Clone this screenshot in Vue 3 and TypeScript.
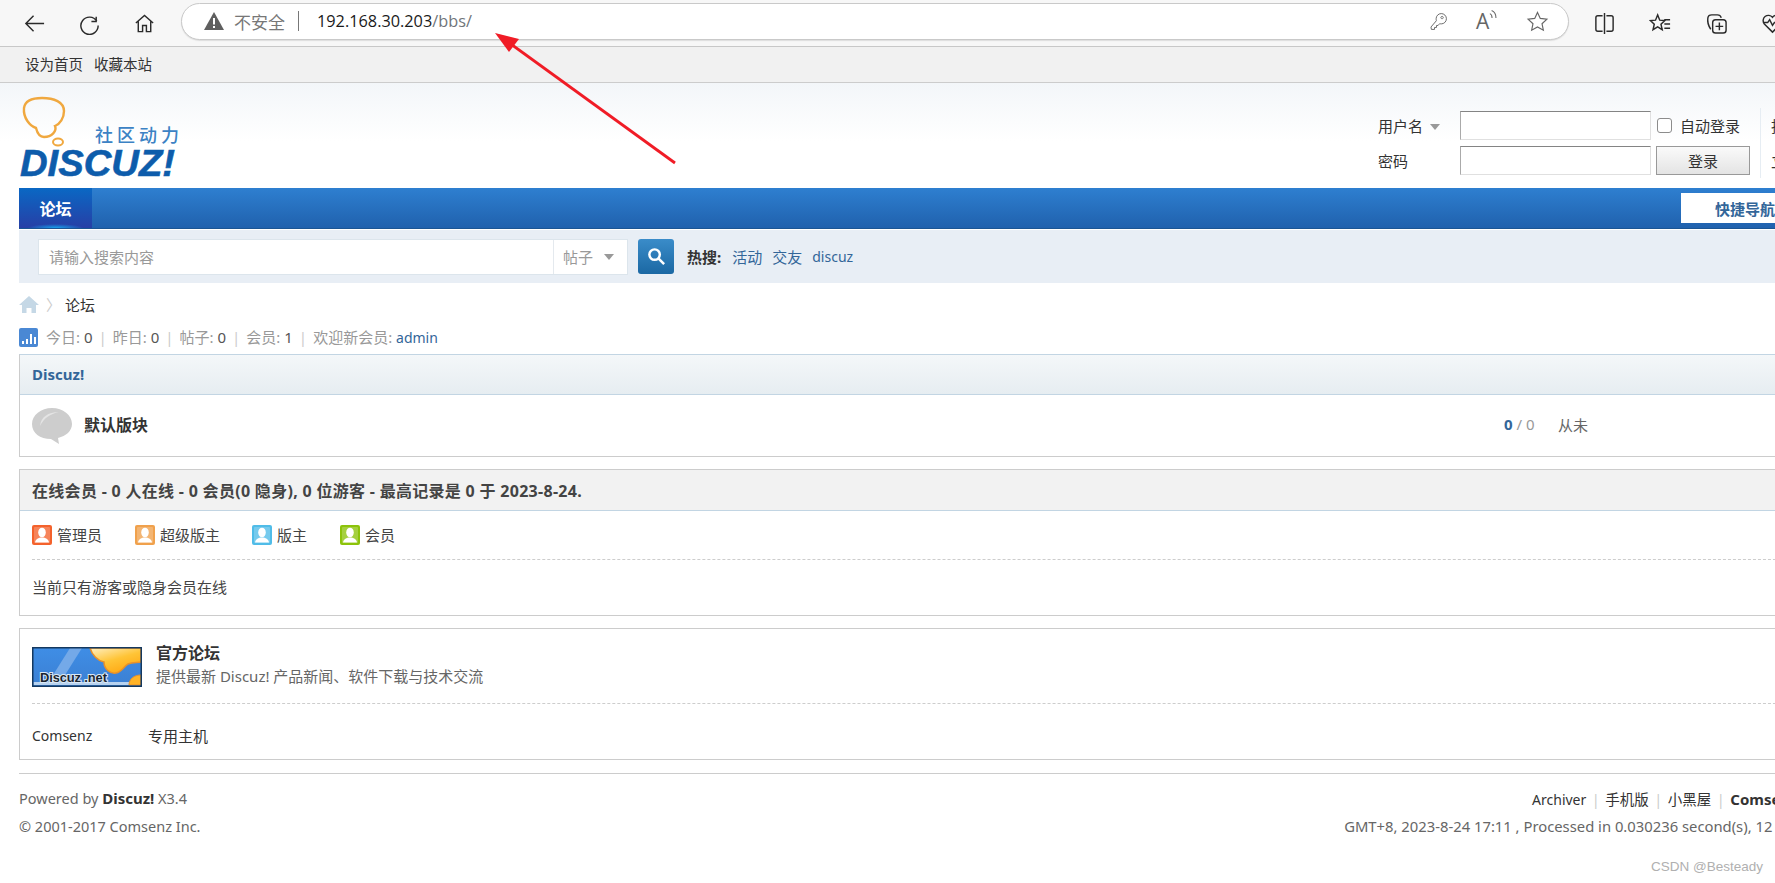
<template>
  <div class="screen">
    <!-- browser toolbar -->
    <div class="toolbar">
      <div class="nav-btns">
        <svg class="ico" viewBox="0 0 24 24"><path d="M22 12H3M11 4l-8 8 8 8" /></svg>
        <svg class="ico" viewBox="0 0 24 24"><path d="M19 5v5h-5M19.6 9.5A9 9 0 1 0 21 14" /></svg>
        <svg class="ico" viewBox="0 0 24 24"><path d="M3 11.5 12 3.5l9 8M5.5 10v10.5h4.5v-6.5h4v6.500h4.500V10" /></svg>
      </div>
      <div class="address">
        <svg class="warn" viewBox="0 0 20 18"><path d="M10 0 20 18H0z" fill="#5f5f5f" /><path d="M9 6h2v6.500H9zM9 14h2v2H9z" fill="#fff" /></svg>
        <span class="insecure">不安全</span>
        <i class="addr-sep"></i>
        <span class="url">192.168.30.203<em>/bbs/</em></span>
        <div class="addr-icons">
          <svg class="ico thin key" viewBox="0 0 24 24"><path d="M15.500 2a6.500 6.500 0 0 1 0 13q-1 0-2-.3l-2 2.300H9.500v2.500H7v2.500H3L2.500 19 9.300 11q-.3-1-.3-2.500A6.500 6.500 0 0 1 15.500 2zM16.500 5.500a1.500 1.500 0 1 0 .01 0z" /></svg>
          <span class="read-aloud">A<svg viewBox="0 0 10 12"><path d="M1 5q2.500 1 2.500 5M3 1.500q5 2 5 8.500" /></svg></span>
          <svg class="ico thin" viewBox="0 0 24 24"><path d="m12 2.500 2.900 6.300 6.900.8-5.100 4.700 1.400 6.800-6.100-3.400-6.100 3.400 1.400-6.800-5.100-4.700 6.900-.8z" /></svg>
        </div>
      </div>
      <div class="tool-icons">
        <svg class="ico" viewBox="0 0 24 24"><path d="M10 4H5a2 2 0 0 0-2 2v12a2 2 0 0 0 2 2h5M14 4h5a2 2 0 0 1 2 2v12a2 2 0 0 1-2 2h-5M12 1v22" /></svg>
        <svg class="ico" viewBox="0 0 24 24"><path d="m9 3 2.200 5.500 5.300.4-4 3.800 1.300 5.800L9 15.500l-4.800 3 1.300-5.800-4-3.800 5.300-.4zM16 8h6M16 12.500h6M16 17h6" /></svg>
        <svg class="ico" viewBox="0 0 24 24"><path d="M6 18Q2 12 3 6q.5-3 4-3h6q3 0 4 3" /><rect x="8" y="8" width="14" height="14" rx="3" /><path d="M15 11v8M11 15h8" /></svg>
        <svg class="ico" viewBox="0 0 24 24"><path d="M12 21 3.500 12.500a5.500 5.500 0 0 1 8.500-7 5.500 5.500 0 0 1 8.500 7zM2 11h5l2-3 3 6 2-3h5" /><circle cx="19" cy="20" r="3.500" fill="#2d9a3a" stroke="none" /></svg>
      </div>
    </div>

    <!-- forum top links -->
    <div class="topbar">
      <a>设为首页</a>
      <a>收藏本站</a>
    </div>

    <div class="wrap">
      <header class="head">
        <svg class="logo" viewBox="0 0 165 85" width="165" height="85">
          <path d="M5 12C6 5 13 2 23 2C35 2 45 6 45 15C45 22 41 28 36 30C38 35 33 41 25 41C20 41 18 36 17 32C11 30 4 22 5 12z" fill="none" stroke="#f0a83f" stroke-width="2.400" />
          <ellipse cx="39" cy="46" rx="5" ry="3.500" fill="none" stroke="#f0a83f" stroke-width="2" />
          <text class="slogan" x="76" y="46" textLength="84">社区动力</text>
          <text class="brand" x="1" y="80" textLength="155" lengthAdjust="spacingAndGlyphs">DISCUZ!</text>
        </svg>
        <div class="login">
          <div class="login-row">
            <label class="login-label">用户名<i class="caret small"></i></label>
            <input class="login-input" type="text" />
            <label class="remember"><span class="check"></span>自动登录</label>
            <span class="login-extra">找回密码</span>
          </div>
          <div class="login-row">
            <label class="login-label">密码</label>
            <input class="login-input" type="password" />
            <button class="login-btn">登录</button>
            <span class="login-extra">立即注册</span>
          </div>
          <i class="login-divider"></i>
        </div>
      </header>

      <nav class="mainnav">
        <a class="nav-tab">论坛</a>
        <a class="quick">快捷导航</a>
      </nav>

      <div class="searchbar">
        <div class="searchbox">
          <span class="placeholder">请输入搜索内容</span>
          <span class="scope">帖子<i class="caret"></i></span>
        </div>
        <button class="search-btn">
          <svg viewBox="0 0 20 20" width="19" height="19"><circle cx="8" cy="8" r="5.500" /><path d="m12 12 6 6" /></svg>
        </button>
        <div class="hot">
          <strong>热搜:</strong>
          <a v-for="h in hotWords" :key="h" :class="{ latin: h === 'discuz' }">{{ h }}</a>
        </div>
      </div>

      <div class="crumb">
        <svg viewBox="0 0 20 17" width="20" height="17"><path d="M10 0 20 9h-3v8h-4.500v-5h-5v5H3V9H0z" fill="#c5d8e6" /></svg>
        <span class="crumb-sep">〉</span>
        <span>论坛</span>
      </div>

      <div class="stats">
        <svg class="stats-ico" viewBox="0 0 19 19" width="19" height="19">
          <rect width="19" height="19" rx="2" fill="#4a88d4" />
          <path d="M3 13h2v3H3zM7 11h2v5H7zM11 6h2v10h-2zM15 9h2v7h-2z" fill="#fff" />
        </svg>
        <template v-for="(s, i) in stats" :key="s.label">
          <span v-if="i" class="pipe">|</span>
          <span>{{ s.label }}: <b>{{ s.value }}</b></span>
        </template>
        <span class="pipe">|</span>
        <span>欢迎新会员: <a class="latin">admin</a></span>
      </div>

      <section class="card forum">
        <h2 class="forum-head">Discuz!</h2>
        <div class="forum-row">
          <svg viewBox="0 0 40 36" width="40" height="36">
            <path d="M20 0C9 0 0 7 0 16s8 15 19 15l8 5-1-6c8-2 14-7 14-14C40 7 31 0 20 0z" fill="#cdcdcd" />
            <path d="M8 18C9 9 16 4 27 4 18 6 12 10 8 18z" fill="#e4e4e4" />
          </svg>
          <strong class="forum-name">默认版块</strong>
          <span class="forum-count"><b>0</b> / 0</span>
          <span class="forum-last">从未</span>
        </div>
      </section>

      <section class="card online">
        <h2 class="online-head">在线会员 - 0 人在线 - 0 会员(0 隐身), 0 位游客 - 最高记录是 0 于 2023-8-24.</h2>
        <div class="inner">
          <div class="legend">
            <span v-for="g in groups" :key="g.name" class="legend-item" :style="{ width: g.width + 'px' }">
              <svg viewBox="0 0 20 20" width="20" height="20">
                <rect width="20" height="20" rx="2" :fill="g.color" />
                <rect x="2" y="2" width="16" height="16" rx="1" fill="#fff" opacity=".22" />
                <ellipse cx="10" cy="7.500" rx="3.800" ry="4.800" fill="#fff" />
                <path d="M3 17.500c.5-3.500 3.500-5 7-5s6.500 1.500 7 5z" fill="#fff" />
              </svg>
              {{ g.name }}
            </span>
          </div>
          <div class="online-note">当前只有游客或隐身会员在线</div>
        </div>
      </section>

      <section class="card links">
        <div class="inner">
          <div class="link-main">
            <svg class="banner" viewBox="0 0 110 40" width="110" height="40">
              <defs>
                <linearGradient id="sky" x1="0" y1="0" x2="0" y2="1">
                  <stop offset="0" stop-color="#3f8ee6" />
                  <stop offset="1" stop-color="#3b7fd2" />
                </linearGradient>
                <linearGradient id="petal" x1="0" y1="0" x2="0.6" y2="1">
                  <stop offset="0" stop-color="#fff0c4" />
                  <stop offset=".55" stop-color="#ffc436" />
                  <stop offset="1" stop-color="#ffa914" />
                </linearGradient>
              </defs>
              <rect width="110" height="40" fill="url(#sky)" />
              <path d="M16 36 38 1h12L28 36z" fill="#74a9e8" />
              <rect x="1.500" y="35" width="107" height="3" fill="#b7d2ef" />
              <path d="M58 1C60 8 66 14 72 15C72 22 78 27 84 26C90 25 92 19 96 17C101 15 106 16 109 15V1Z" fill="url(#petal)" stroke="#e8912a" stroke-width="1.500" />
              <path d="M97 38C97 32 102 28 109 28V38Z" fill="#ffb326" stroke="#e8912a" />
              <rect x=".75" y=".75" width="108.500" height="38.500" fill="none" stroke="#14385f" stroke-width="1.500" />
              <text x="8" y="35" class="banner-text" textLength="67">Discuz .net</text>
            </svg>
            <div>
              <strong class="link-title">官方论坛</strong>
              <p class="link-desc">提供最新 Discuz! 产品新闻、软件下载与技术交流</p>
            </div>
          </div>
          <div class="link-text">
            <a class="latin">Comsenz</a>
            <a>专用主机</a>
          </div>
        </div>
      </section>

      <footer class="foot">
        <div class="foot-row">
          <span>Powered by <b>Discuz!</b> X3.4</span>
          <span class="foot-links">
            <a class="latin">Archiver</a><i>|</i><a>手机版</a><i>|</i><a>小黑屋</a><i>|</i><b>Comsenz Inc.</b>
          </span>
        </div>
        <div class="foot-row">
          <span class="copy">© 2001-2017 Comsenz Inc.</span>
          <span class="debug">GMT+8, 2023-8-24 17:11 , Processed in 0.030236 second(s), 12 queries .</span>
        </div>
      </footer>
    </div>

    <!-- annotation drawn over the screenshot -->
    <svg class="annotation" viewBox="0 0 1775 883" width="1775" height="883">
      <path d="M675 163 508 42" stroke="#f01c26" stroke-width="2.800" fill="none" />
      <path d="M495 33 519 39 509 52z" fill="#f01c26" />
    </svg>
    <span class="watermark">CSDN @Besteady</span>
  </div>
</template>

<script setup lang="ts">
interface Group {
  name: string
  color: string
  width: number
}

const hotWords: string[] = ['活动', '交友', 'discuz']

const stats = [
  { label: '今日', value: 0 },
  { label: '昨日', value: 0 },
  { label: '帖子', value: 0 },
  { label: '会员', value: 1 }
]

const groups: Group[] = [
  { name: '管理员', color: '#f4622c', width: 103 },
  { name: '超级版主', color: '#f0a14c', width: 117 },
  { name: '版主', color: '#50bce8', width: 88 },
  { name: '会员', color: '#8cc30a', width: 80 }
]
</script>

<style>
html,
body {
  margin: 0;
  overflow: hidden;
  background: #fff;
}
</style>

<style scoped>
.screen {
  position: relative;
  width: 1775px;
  height: 883px;
  overflow: hidden;
  font-family: "Noto Sans", "Noto Sans CJK SC", sans-serif;
  font-size: 15px;
  color: #444;
}

.latin {
  font-size: 14px;
}

.toolbar {
  height: 46px;
  display: flex;
  align-items: center;
  background: #f7f7f7;
  border-bottom: 1px solid #c8c8c8;
  box-sizing: content-box;
}

.ico {
  width: 23px;
  height: 23px;
  flex: none;
  fill: none;
  stroke: #2b2b2b;
  stroke-width: 1.500;
}

.ico.thin {
  stroke: #666;
  stroke-width: 1.200;
}

.ico.key {
  width: 19px;
  height: 19px;
}

.nav-btns {
  display: flex;
  align-items: center;
  gap: 32px;
  width: 181px;
  flex: none;
  padding-left: 23px;
  box-sizing: border-box;
}

.address {
  width: 1388px;
  height: 37px;
  flex: none;
  box-sizing: border-box;
  display: flex;
  align-items: center;
  padding: 0 19px 0 22px;
  background: #fff;
  border: 1px solid #c9c9c9;
  border-radius: 19px;
  margin-top: -4px;
  box-shadow: 0 1px 1px #ddd;
}

.warn {
  width: 20px;
  height: 18px;
}

.insecure {
  margin-left: 10px;
  font-size: 17px;
  color: #777;
}

.addr-sep {
  width: 1px;
  height: 20px;
  background: #777;
  margin: 0 18px 0 13px;
}

.url {
  font-family: "Open Sans", sans-serif;
  font-size: 16.300px;
  color: #1a1a1a;
}

.url em {
  font-style: normal;
  color: #70757a;
}

.addr-icons {
  margin-left: auto;
  display: flex;
  align-items: center;
  gap: 28px;
}

.read-aloud {
  display: flex;
  align-items: flex-start;
  width: 22px;
  font-size: 21px;
  line-height: 24px;
  color: #666;
  font-family: "Open Sans", sans-serif;
}

.read-aloud svg {
  width: 9px;
  height: 11px;
  fill: none;
  stroke: #666;
  stroke-width: 1.200;
}

.tool-icons {
  display: flex;
  align-items: center;
  gap: 33px;
  flex: none;
  padding-left: 24px;
}

.topbar {
  height: 36px;
  display: flex;
  align-items: center;
  gap: 11px;
  padding: 0 0 2px 25px;
  box-sizing: border-box;
  background: #f1f1f1;
  border-bottom: 1px solid #ccc;
  font-size: 14.500px;
  color: #333;
}

.wrap {
  width: 1830px;
  margin-left: 19px;
}

.head {
  position: relative;
  height: 105px;
  margin-left: -19px;
  padding-left: 19px;
  display: flex;
  justify-content: space-between;
  background: linear-gradient(#f3f6f9, #fff 58px);
}

.logo {
  margin-top: 13px;
  flex: none;
}

.slogan {
  font-size: 18px;
  font-weight: 500;
  fill: #3c82c4;
}

.brand {
  font-family: "Liberation Sans", sans-serif;
  font-size: 37px;
  font-weight: 700;
  font-style: italic;
  fill: #0d5cab;
  stroke: #0d5cab;
  stroke-width: .6;
}

.login {
  position: relative;
  width: 471px;
  padding-top: 28px;
  display: flex;
  flex-direction: column;
  gap: 6px;
}

.login-row {
  display: flex;
  align-items: center;
  height: 29px;
  color: #333;
}

.login-label {
  width: 82px;
  flex: none;
}

.caret {
  display: inline-block;
  width: 0;
  height: 0;
  border: 5px solid transparent;
  border-top: 6px solid #999;
  border-bottom: 0;
  margin-left: 11px;
  vertical-align: 2px;
}

.caret.small {
  margin-left: 7px;
}

.login-input {
  width: 191px;
  height: 29px;
  box-sizing: border-box;
  padding: 0;
  background: #fff;
  border: 1px solid #e0e0e0;
  border-top-color: #848484;
  border-left-color: #aaa;
  flex: none;
}

.remember {
  display: flex;
  align-items: center;
  width: 103px;
  flex: none;
  margin-left: 6px;
  gap: 8px;
}

.check {
  width: 15px;
  height: 15px;
  box-sizing: border-box;
  border: 1px solid #8c8c8c;
  border-radius: 3px;
  background: #fff;
}

.login-btn {
  width: 94px;
  height: 29px;
  flex: none;
  margin: 0 10px 0 5px;
  font: inherit;
  color: #333;
  background: linear-gradient(#fafafa, #e4e4e4);
  border: 1px solid #999;
  padding: 0;
}

.login-extra {
  white-space: nowrap;
  margin-left: 11px;
}

.login-divider {
  position: absolute;
  left: 382px;
  top: 25px;
  width: 1px;
  height: 70px;
  background: #e6edf3;
}

.mainnav {
  height: 41px;
  box-sizing: border-box;
  display: flex;
  justify-content: space-between;
  align-items: center;
  background: linear-gradient(#2e7fd0, #2061ad);
  border-bottom: 1px solid #1b5593;
}

.nav-tab {
  width: 73px;
  height: 100%;
  display: flex;
  align-items: center;
  justify-content: center;
  color: #fff;
  font-size: 16px;
  font-weight: 700;
  background: radial-gradient(ellipse 28px 4px at 50% 100%, #18a3ee, transparent), linear-gradient(#0a68c4, #273fa6);
}

.quick {
  width: 168px;
  height: 30px;
  box-sizing: border-box;
  padding-left: 34px;
  display: flex;
  align-items: center;
  background: #fff;
  color: #336699;
  font-size: 15px;
  font-weight: 700;
  white-space: nowrap;
}

.searchbar {
  height: 54px;
  box-sizing: border-box;
  display: flex;
  align-items: center;
  padding: 0 0 0 19px;
  background: #e8eef5;
  border-top: 1px solid #fff;
}

.searchbox {
  width: 590px;
  height: 36px;
  box-sizing: border-box;
  display: flex;
  align-items: center;
  background: #fff;
  border: 1px solid #dce5ec;
  color: #999;
}

.placeholder {
  width: 514px;
  padding-left: 10px;
  box-sizing: border-box;
}

.scope {
  flex: 1;
  align-self: stretch;
  display: flex;
  align-items: center;
  padding-left: 9px;
  border-left: 1px solid #e4e9ee;
}

.search-btn {
  width: 36px;
  height: 35px;
  margin-left: 10px;
  padding: 0;
  display: flex;
  align-items: center;
  justify-content: center;
  border: 0;
  border-radius: 3px;
  background: linear-gradient(#3a8cc9, #1b68a3);
}

.search-btn svg {
  fill: none;
  stroke: #fff;
  stroke-width: 2.600;
}

.hot {
  margin-left: 13px;
  display: flex;
  align-items: center;
  gap: 10px;
  color: #336699;
}

.hot strong {
  color: #333;
  margin-right: 1px;
}

.crumb {
  height: 42px;
  margin-bottom: 2px;
  display: flex;
  align-items: center;
  color: #333;
}

.crumb-sep {
  width: 26px;
  color: #ccc;
  text-align: left;
  padding-left: 7px;
  box-sizing: border-box;
}

.stats {
  height: 20px;
  display: flex;
  align-items: center;
  color: #999;
  line-height: 16px;
}

.stats-ico {
  margin-right: 8px;
}

.stats b {
  font-weight: 400;
  color: #555;
}

.stats a {
  color: #336699;
}

.pipe {
  margin: 0 6px;
  color: #ccc;
}

.card {
  box-sizing: border-box;
  background: #fff;
  border: 1px solid #ccc;
  margin-bottom: 12px;
}

.forum {
  margin-top: 7px;
  height: 103px;
  border-color: #c2d5e3 #ccc #ccc #ccc;
}

.forum-head {
  margin: 0;
  height: 40px;
  box-sizing: border-box;
  display: flex;
  align-items: center;
  padding: 0 0 2px 12px;
  font-size: 15px;
  color: #336699;
  background: linear-gradient(#f4f7f9, #e6edf1);
  border-bottom: 1px solid #c2d5e3;
}

.forum-row {
  height: 61px;
  display: grid;
  grid-template-columns: 40px 1432px 54px 100px;
  align-items: center;
  padding-left: 12px;
}

.forum-name {
  padding-left: 12px;
  font-size: 16px;
  color: #333;
  margin-top: -3px;
}

.forum-count {
  color: #999;
  margin-top: -3px;
}

.forum-count b {
  color: #336699;
}

.forum-last {
  color: #666;
  margin-top: -3px;
}

.online {
  height: 147px;
}

.online-head {
  margin: 0;
  height: 41px;
  box-sizing: border-box;
  display: flex;
  align-items: center;
  padding-left: 12px;
  font-size: 16px;
  letter-spacing: .3px;
  color: #444;
  background: #f2f2f2;
  border-bottom: 1px solid #c2d5e3;
}

.inner {
  padding: 0 12px;
}

.legend {
  height: 48px;
  display: flex;
  align-items: center;
  border-bottom: 1px dashed #cdcdcd;
  color: #444;
}

.legend-item {
  display: flex;
  align-items: center;
  gap: 5px;
  flex: none;
  line-height: 18px;
}

.online-note {
  height: 55px;
  padding-bottom: 3px;
  box-sizing: border-box;
  display: flex;
  align-items: center;
  color: #444;
}

.links {
  height: 132px;
  margin-bottom: 13px;
}

.link-main {
  height: 75px;
  box-sizing: border-box;
  padding-top: 18px;
  display: flex;
  gap: 14px;
  border-bottom: 1px dashed #cdcdcd;
}

.banner {
  flex: none;
}

.banner-text {
  font-family: "Liberation Sans", sans-serif;
  font-size: 13px;
  font-weight: 700;
  fill: #1a2530;
  stroke: #dbe8f5;
  stroke-width: 2;
  paint-order: stroke;
}

.link-title {
  display: block;
  margin-top: -5px;
  line-height: 23px;
  font-size: 16px;
  color: #333;
}

.link-desc {
  margin: 0;
  line-height: 23px;
  color: #666;
}

.link-text {
  height: 54px;
  box-sizing: border-box;
  padding-top: 8px;
  display: flex;
  align-items: center;
  color: #333;
}

.link-text a:first-child {
  width: 116px;
}

.foot {
  border-top: 1px solid #ccc;
  padding-top: 10px;
  color: #666;
  font-size: 14.500px;
}

.foot-row {
  height: 28px;
  display: flex;
  align-items: center;
  justify-content: space-between;
  white-space: nowrap;
}

.foot b {
  color: #333;
  font-size: 15px;
}

.foot-links {
  color: #333;
  font-size: 14.500px;
  padding-right: 20px;
}

.foot-links i {
  font-style: normal;
  color: #ccc;
  margin: 0 5.500px;
}

.debug {
  font-size: 14.800px;
  margin-right: 13px;
}

.annotation {
  position: absolute;
  top: 0;
  left: 0;
  pointer-events: none;
}

.watermark {
  position: absolute;
  left: 1651px;
  top: 858px;
  font-family: "Liberation Sans", sans-serif;
  font-size: 13.500px;
  line-height: 18px;
  color: #b0b0b0;
}
</style>
